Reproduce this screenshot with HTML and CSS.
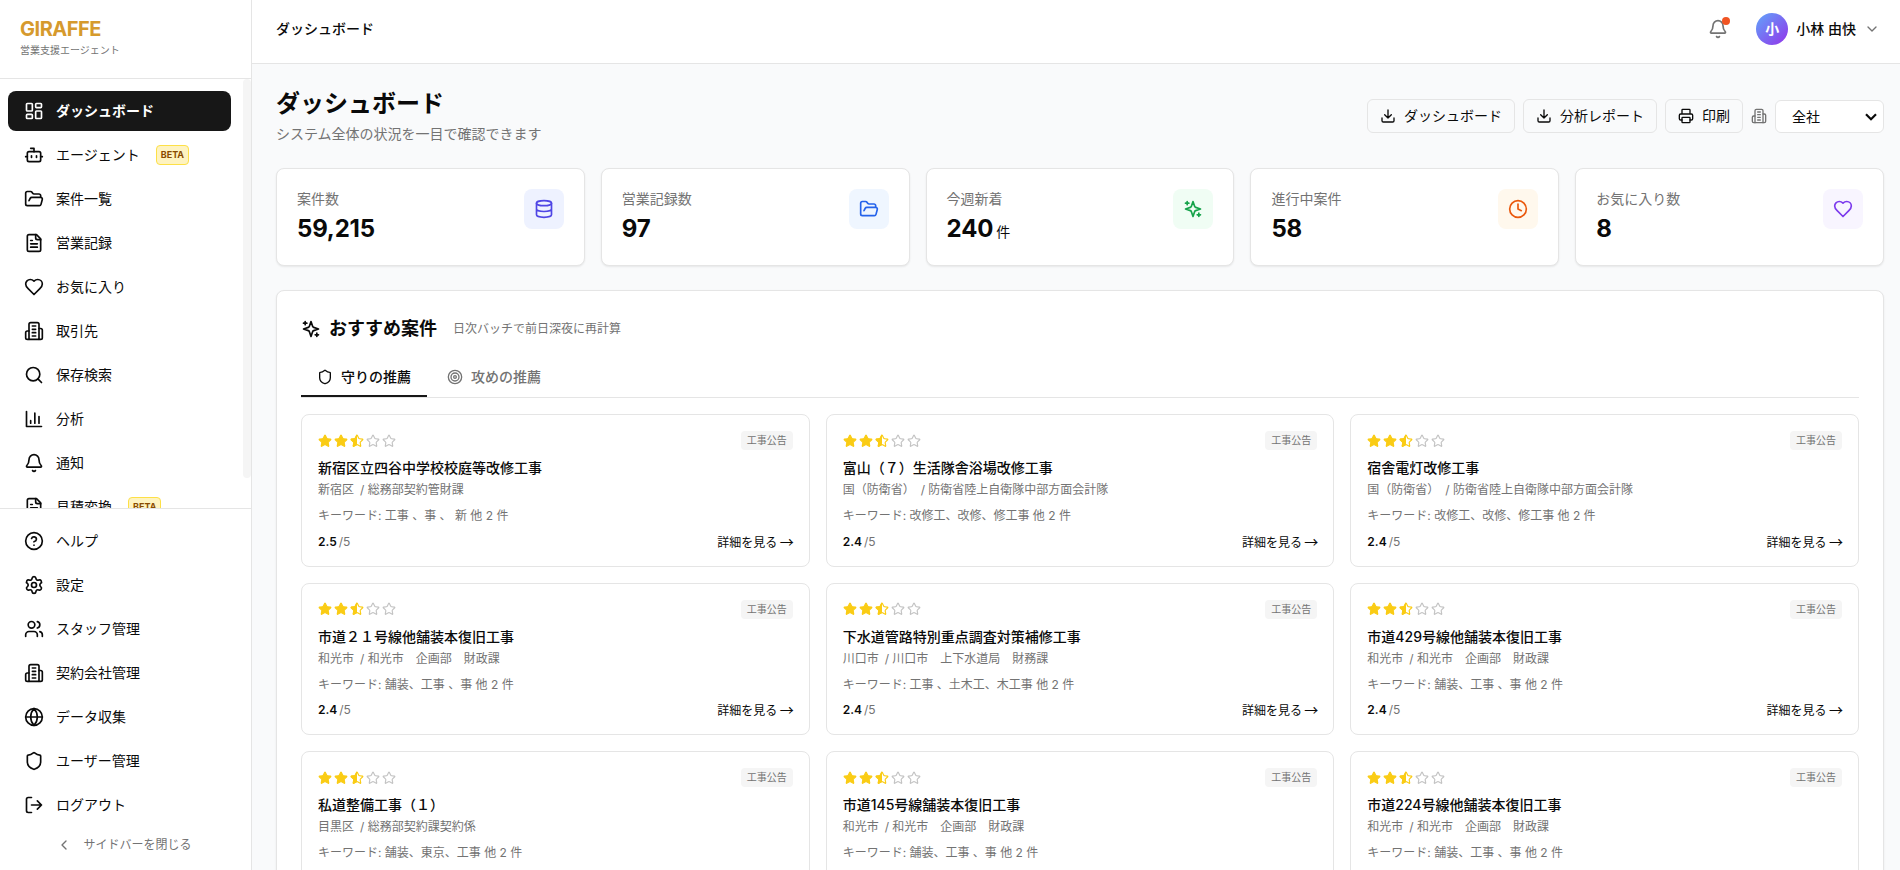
FILE: index.html
```html
<!DOCTYPE html>
<html lang="ja">
<head>
  <meta charset="UTF-8">
  <title>ダッシュボード | GIRAFFE</title>
  <link rel="stylesheet" href="styles.css">
</head>
<body>
  <!-- icon sprite -->
  <svg class="sprite" aria-hidden="true">
    <symbol id="i-dashboard" viewBox="0 0 24 24"><rect width="7" height="9" x="3" y="3" rx="1"/><rect width="7" height="5" x="14" y="3" rx="1"/><rect width="7" height="9" x="14" y="12" rx="1"/><rect width="7" height="5" x="3" y="16" rx="1"/></symbol>
    <symbol id="i-bot" viewBox="0 0 24 24"><path d="M12 8V4H8"/><rect width="16" height="12" x="4" y="8" rx="2"/><path d="M2 14h2M20 14h2M15 13v2M9 13v2"/></symbol>
    <symbol id="i-folder" viewBox="0 0 24 24"><path d="m6 14 1.5-2.9A2 2 0 0 1 9.24 10H20a2 2 0 0 1 1.94 2.5l-1.54 6a2 2 0 0 1-1.95 1.5H4a2 2 0 0 1-2-2V5a2 2 0 0 1 2-2h3.9a2 2 0 0 1 1.69.9l.81 1.2a2 2 0 0 0 1.67.9H18a2 2 0 0 1 2 2v2"/></symbol>
    <symbol id="i-file" viewBox="0 0 24 24"><path d="M15 2H6a2 2 0 0 0-2 2v16a2 2 0 0 0 2 2h12a2 2 0 0 0 2-2V7Z"/><path d="M14 2v4a2 2 0 0 0 2 2h4M10 9H8M16 13H8M16 17H8"/></symbol>
    <symbol id="i-heart" viewBox="0 0 24 24"><path d="M19 14c1.49-1.46 3-3.21 3-5.5A5.5 5.5 0 0 0 16.5 3c-1.76 0-3 .5-4.5 2-1.5-1.5-2.74-2-4.5-2A5.5 5.5 0 0 0 2 8.5c0 2.3 1.5 4.05 3 5.5l7 7Z"/></symbol>
    <symbol id="i-building" viewBox="0 0 24 24"><path d="M6 22V4a2 2 0 0 1 2-2h8a2 2 0 0 1 2 2v18Z"/><path d="M6 12H4a2 2 0 0 0-2 2v6a2 2 0 0 0 2 2h2M18 9h2a2 2 0 0 1 2 2v9a2 2 0 0 1-2 2h-2M10 6h4M10 10h4M10 14h4M10 18h4"/></symbol>
    <symbol id="i-search" viewBox="0 0 24 24"><circle cx="11" cy="11" r="8"/><path d="m21 21-4.3-4.3"/></symbol>
    <symbol id="i-chart" viewBox="0 0 24 24"><path d="M3 3v18h18M18 17V9M13 17V5M8 17v-3"/></symbol>
    <symbol id="i-bell" viewBox="0 0 24 24"><path d="M10.268 21a2 2 0 0 0 3.464 0"/><path d="M3.262 15.326A1 1 0 0 0 4 17h16a1 1 0 0 0 .74-1.673C19.41 13.956 18 12.499 18 8A6 6 0 0 0 6 8c0 4.499-1.411 5.956-2.738 7.326"/></symbol>
    <symbol id="i-help" viewBox="0 0 24 24"><circle cx="12" cy="12" r="10"/><path d="M9.09 9a3 3 0 0 1 5.83 1c0 2-3 3-3 3M12 17h.01"/></symbol>
    <symbol id="i-settings" viewBox="0 0 24 24"><path d="M9.671 4.136a2.34 2.34 0 0 1 4.659 0 2.34 2.34 0 0 0 3.319 1.915 2.34 2.34 0 0 1 2.33 4.033 2.34 2.34 0 0 0 0 3.831 2.34 2.34 0 0 1-2.33 4.033 2.34 2.34 0 0 0-3.319 1.915 2.34 2.34 0 0 1-4.659 0 2.34 2.34 0 0 0-3.32-1.915 2.34 2.34 0 0 1-2.33-4.033 2.34 2.34 0 0 0 0-3.831A2.34 2.34 0 0 1 6.35 6.051a2.34 2.34 0 0 0 3.319-1.915"/><circle cx="12" cy="12" r="3"/></symbol>
    <symbol id="i-users" viewBox="0 0 24 24"><path d="M16 21v-2a4 4 0 0 0-4-4H6a4 4 0 0 0-4 4v2"/><circle cx="9" cy="7" r="4"/><path d="M22 21v-2a4 4 0 0 0-3-3.87M16 3.13a4 4 0 0 1 0 7.75"/></symbol>
    <symbol id="i-globe" viewBox="0 0 24 24"><circle cx="12" cy="12" r="10"/><path d="M12 2a14.5 14.5 0 0 0 0 20 14.5 14.5 0 0 0 0-20M2 12h20"/></symbol>
    <symbol id="i-shield" viewBox="0 0 24 24"><path d="M20 13c0 5-3.5 7.5-7.66 8.95a1 1 0 0 1-.67-.01C7.5 20.5 4 18 4 13V6a1 1 0 0 1 1-1c2 0 4.5-1.2 6.24-2.72a1.17 1.17 0 0 1 1.52 0C14.51 3.81 17 5 19 5a1 1 0 0 1 1 1z"/></symbol>
    <symbol id="i-logout" viewBox="0 0 24 24"><path d="M9 21H5a2 2 0 0 1-2-2V5a2 2 0 0 1 2-2h4M16 17l5-5-5-5M21 12H9"/></symbol>
    <symbol id="i-left" viewBox="0 0 24 24"><path d="m15 18-6-6 6-6"/></symbol>
    <symbol id="i-down" viewBox="0 0 24 24"><path d="m6 9 6 6 6-6"/></symbol>
    <symbol id="i-download" viewBox="0 0 24 24"><path d="M21 15v4a2 2 0 0 1-2 2H5a2 2 0 0 1-2-2v-4M7 10l5 5 5-5M12 15V3"/></symbol>
    <symbol id="i-printer" viewBox="0 0 24 24"><path d="M6 18H4a2 2 0 0 1-2-2v-5a2 2 0 0 1 2-2h16a2 2 0 0 1 2 2v5a2 2 0 0 1-2 2h-2M6 9V3a1 1 0 0 1 1-1h10a1 1 0 0 1 1 1v6"/><rect x="6" y="14" width="12" height="8" rx="1"/></symbol>
    <symbol id="i-database" viewBox="0 0 24 24"><ellipse cx="12" cy="5" rx="9" ry="3"/><path d="M3 5v14a9 3 0 0 0 18 0V5M3 12a9 3 0 0 0 18 0"/></symbol>
    <symbol id="i-sparkles" viewBox="0 0 24 24"><path d="m12 3-1.912 5.813a2 2 0 0 1-1.275 1.275L3 12l5.813 1.912a2 2 0 0 1 1.275 1.275L12 21l1.912-5.813a2 2 0 0 1 1.275-1.275L21 12l-5.813-1.912a2 2 0 0 1-1.275-1.275L12 3Z"/><path d="M5 3v4M19 17v4M3 5h4M17 19h4"/></symbol>
    <symbol id="i-clock" viewBox="0 0 24 24"><circle cx="12" cy="12" r="10"/><path d="M12 6v6l4 2"/></symbol>
    <symbol id="i-target" viewBox="0 0 24 24"><circle cx="12" cy="12" r="10"/><circle cx="12" cy="12" r="6"/><circle cx="12" cy="12" r="2"/></symbol>
    <symbol id="i-star" viewBox="0 0 24 24"><path d="M11.525 2.295a.53.53 0 0 1 .95 0l2.31 4.679a2.123 2.123 0 0 0 1.595 1.16l5.166.756a.53.53 0 0 1 .294.904l-3.736 3.638a2.123 2.123 0 0 0-.611 1.878l.882 5.14a.53.53 0 0 1-.771.56l-4.618-2.428a2.122 2.122 0 0 0-1.973 0L6.396 21.01a.53.53 0 0 1-.77-.56l.881-5.139a2.122 2.122 0 0 0-.611-1.879L2.16 9.795a.53.53 0 0 1 .294-.906l5.165-.755a2.122 2.122 0 0 0 1.597-1.16z"/></symbol>
    <symbol id="i-star-half" viewBox="0 0 24 24"><path d="M12 18.338a2.1 2.1 0 0 0-.987.244L6.396 21.01a.53.53 0 0 1-.77-.56l.881-5.139a2.12 2.12 0 0 0-.611-1.879L2.16 9.795a.53.53 0 0 1 .294-.906l5.165-.755a2.12 2.12 0 0 0 1.597-1.16l2.309-4.679A.53.53 0 0 1 12 2"/></symbol>
    <symbol id="rating-half" viewBox="0 0 78 14">
      <use href="#i-star" class="star-on" x="0" width="14" height="14"/>
      <use href="#i-star" class="star-on" x="16" width="14" height="14"/>
      <use href="#i-star" class="star-line" x="32" width="14" height="14"/>
      <use href="#i-star-half" class="star-on" x="32" width="14" height="14"/>
      <use href="#i-star" class="star-off" x="48" width="14" height="14"/>
      <use href="#i-star" class="star-off" x="64" width="14" height="14"/>
    </symbol>
  </svg>

  <div class="app">
    <aside class="sidebar">
      <div class="brand">
        <div class="brand-name">GIRAFFE</div>
        <div class="brand-sub">営業支援エージェント</div>
      </div>

      <div class="nav-wrap">
        <nav class="nav">
          <a class="nav-item active"><svg class="icon"><use href="#i-dashboard"/></svg>ダッシュボード</a>
          <a class="nav-item"><svg class="icon"><use href="#i-bot"/></svg>エージェント<span class="beta">BETA</span></a>
          <a class="nav-item"><svg class="icon"><use href="#i-folder"/></svg>案件一覧</a>
          <a class="nav-item"><svg class="icon"><use href="#i-file"/></svg>営業記録</a>
          <a class="nav-item"><svg class="icon"><use href="#i-heart"/></svg>お気に入り</a>
          <a class="nav-item"><svg class="icon"><use href="#i-building"/></svg>取引先</a>
          <a class="nav-item"><svg class="icon"><use href="#i-search"/></svg>保存検索</a>
          <a class="nav-item"><svg class="icon"><use href="#i-chart"/></svg>分析</a>
          <a class="nav-item"><svg class="icon"><use href="#i-bell"/></svg>通知</a>
          <a class="nav-item"><svg class="icon"><use href="#i-file"/></svg>見積変換<span class="beta">BETA</span></a>
        </nav>
        <div class="nav-scroll"></div>
      </div>

      <div class="nav-bottom">
        <a class="nav-item"><svg class="icon"><use href="#i-help"/></svg>ヘルプ</a>
        <a class="nav-item"><svg class="icon"><use href="#i-settings"/></svg>設定</a>
        <a class="nav-item"><svg class="icon"><use href="#i-users"/></svg>スタッフ管理</a>
        <a class="nav-item"><svg class="icon"><use href="#i-building"/></svg>契約会社管理</a>
        <a class="nav-item"><svg class="icon"><use href="#i-globe"/></svg>データ収集</a>
        <a class="nav-item"><svg class="icon"><use href="#i-shield"/></svg>ユーザー管理</a>
        <a class="nav-item"><svg class="icon"><use href="#i-logout"/></svg>ログアウト</a>
        <a class="collapse"><svg class="icon icon-sm"><use href="#i-left"/></svg>サイドバーを閉じる</a>
      </div>
    </aside>

    <div class="main">
      <header class="topbar">
        <div class="topbar-title">ダッシュボード</div>
        <div class="topbar-right">
          <div class="bell"><svg class="icon"><use href="#i-bell"/></svg><span class="bell-dot"></span></div>
          <div class="user">
            <span class="avatar">小</span>
            <span>小林 由快</span>
            <svg class="icon icon-sm muted"><use href="#i-down"/></svg>
          </div>
        </div>
      </header>

      <main class="content">
        <div class="page-head">
          <div>
            <h1>ダッシュボード</h1>
            <p>システム全体の状況を一目で確認できます</p>
          </div>
          <div class="actions">
            <button class="btn"><svg class="icon icon-sm"><use href="#i-download"/></svg>ダッシュボード</button>
            <button class="btn"><svg class="icon icon-sm"><use href="#i-download"/></svg>分析レポート</button>
            <button class="btn"><svg class="icon icon-sm"><use href="#i-printer"/></svg>印刷</button>
            <svg class="icon icon-sm muted"><use href="#i-building"/></svg>
            <div class="scope">
              <select><option>全社</option></select>
              <svg class="scope-arrow" viewBox="0 0 12 8"><path d="M1 1.2 6 6.2 11 1.2"/></svg>
            </div>
          </div>
        </div>

        <section class="stats">
          <div class="stat">
            <div><div class="stat-label">案件数</div><div class="stat-value">59,215</div></div>
            <div class="stat-icon indigo"><svg class="icon"><use href="#i-database"/></svg></div>
          </div>
          <div class="stat">
            <div><div class="stat-label">営業記録数</div><div class="stat-value">97</div></div>
            <div class="stat-icon blue"><svg class="icon"><use href="#i-folder"/></svg></div>
          </div>
          <div class="stat">
            <div><div class="stat-label">今週新着</div><div class="stat-value">240<span class="unit">件</span></div></div>
            <div class="stat-icon green"><svg class="icon"><use href="#i-sparkles"/></svg></div>
          </div>
          <div class="stat">
            <div><div class="stat-label">進行中案件</div><div class="stat-value">58</div></div>
            <div class="stat-icon orange"><svg class="icon"><use href="#i-clock"/></svg></div>
          </div>
          <div class="stat">
            <div><div class="stat-label">お気に入り数</div><div class="stat-value">8</div></div>
            <div class="stat-icon purple"><svg class="icon"><use href="#i-heart"/></svg></div>
          </div>
        </section>

        <section class="panel">
          <div class="panel-head">
            <svg class="icon"><use href="#i-sparkles"/></svg>
            <h2>おすすめ案件</h2>
            <span class="panel-note">日次バッチで前日深夜に再計算</span>
          </div>
          <div class="tabs">
            <a class="tab active"><svg class="icon icon-sm"><use href="#i-shield"/></svg>守りの推薦</a>
            <a class="tab"><svg class="icon icon-sm"><use href="#i-target"/></svg>攻めの推薦</a>
          </div>

          <div class="cards">
            <article class="card">
              <div class="card-top"><svg class="stars"><use href="#rating-half"/></svg><span class="tag">工事公告</span></div>
              <h3>新宿区立四谷中学校校庭等改修工事</h3>
              <p class="org">新宿区<span class="dept">/ 総務部契約管財課</span></p>
              <p class="keywords">キーワード: 工事 、事 、 新 他 2 件</p>
              <div class="card-foot"><span><b>2.5</b><span class="max">/5</span></span><a>詳細を見る <span class="arrow">→</span></a></div>
            </article>
            <article class="card">
              <div class="card-top"><svg class="stars"><use href="#rating-half"/></svg><span class="tag">工事公告</span></div>
              <h3>富山（７）生活隊舎浴場改修工事</h3>
              <p class="org">国（防衛省）<span class="dept">/ 防衛省陸上自衛隊中部方面会計隊</span></p>
              <p class="keywords">キーワード: 改修工、改修、修工事 他 2 件</p>
              <div class="card-foot"><span><b>2.4</b><span class="max">/5</span></span><a>詳細を見る <span class="arrow">→</span></a></div>
            </article>
            <article class="card">
              <div class="card-top"><svg class="stars"><use href="#rating-half"/></svg><span class="tag">工事公告</span></div>
              <h3>宿舎電灯改修工事</h3>
              <p class="org">国（防衛省）<span class="dept">/ 防衛省陸上自衛隊中部方面会計隊</span></p>
              <p class="keywords">キーワード: 改修工、改修、修工事 他 2 件</p>
              <div class="card-foot"><span><b>2.4</b><span class="max">/5</span></span><a>詳細を見る <span class="arrow">→</span></a></div>
            </article>
            <article class="card">
              <div class="card-top"><svg class="stars"><use href="#rating-half"/></svg><span class="tag">工事公告</span></div>
              <h3>市道２１号線他舗装本復旧工事</h3>
              <p class="org">和光市<span class="dept">/ 和光市　企画部　財政課</span></p>
              <p class="keywords">キーワード: 舗装、工事 、事 他 2 件</p>
              <div class="card-foot"><span><b>2.4</b><span class="max">/5</span></span><a>詳細を見る <span class="arrow">→</span></a></div>
            </article>
            <article class="card">
              <div class="card-top"><svg class="stars"><use href="#rating-half"/></svg><span class="tag">工事公告</span></div>
              <h3>下水道管路特別重点調査対策補修工事</h3>
              <p class="org">川口市<span class="dept">/ 川口市　上下水道局　財務課</span></p>
              <p class="keywords">キーワード: 工事 、土木工、木工事 他 2 件</p>
              <div class="card-foot"><span><b>2.4</b><span class="max">/5</span></span><a>詳細を見る <span class="arrow">→</span></a></div>
            </article>
            <article class="card">
              <div class="card-top"><svg class="stars"><use href="#rating-half"/></svg><span class="tag">工事公告</span></div>
              <h3>市道429号線他舗装本復旧工事</h3>
              <p class="org">和光市<span class="dept">/ 和光市　企画部　財政課</span></p>
              <p class="keywords">キーワード: 舗装、工事 、事 他 2 件</p>
              <div class="card-foot"><span><b>2.4</b><span class="max">/5</span></span><a>詳細を見る <span class="arrow">→</span></a></div>
            </article>
            <article class="card">
              <div class="card-top"><svg class="stars"><use href="#rating-half"/></svg><span class="tag">工事公告</span></div>
              <h3>私道整備工事（１）</h3>
              <p class="org">目黒区<span class="dept">/ 総務部契約課契約係</span></p>
              <p class="keywords">キーワード: 舗装、東京、工事 他 2 件</p>
              <div class="card-foot"><span><b>2.4</b><span class="max">/5</span></span><a>詳細を見る <span class="arrow">→</span></a></div>
            </article>
            <article class="card">
              <div class="card-top"><svg class="stars"><use href="#rating-half"/></svg><span class="tag">工事公告</span></div>
              <h3>市道145号線舗装本復旧工事</h3>
              <p class="org">和光市<span class="dept">/ 和光市　企画部　財政課</span></p>
              <p class="keywords">キーワード: 舗装、工事 、事 他 2 件</p>
              <div class="card-foot"><span><b>2.4</b><span class="max">/5</span></span><a>詳細を見る <span class="arrow">→</span></a></div>
            </article>
            <article class="card">
              <div class="card-top"><svg class="stars"><use href="#rating-half"/></svg><span class="tag">工事公告</span></div>
              <h3>市道224号線他舗装本復旧工事</h3>
              <p class="org">和光市<span class="dept">/ 和光市　企画部　財政課</span></p>
              <p class="keywords">キーワード: 舗装、工事 、事 他 2 件</p>
              <div class="card-foot"><span><b>2.4</b><span class="max">/5</span></span><a>詳細を見る <span class="arrow">→</span></a></div>
            </article>
          </div>
        </section>
      </main>
    </div>
  </div>
</body>
</html>
```
FILE: styles.css
```css
* {
  box-sizing: border-box;
}
body {
  margin: 0;
  font-family: Inter, "Noto Sans CJK JP", sans-serif;
  font-size: 14px;
  line-height: 20px;
  color: #0a0a0a;
  background: #f9fafb;
}
h1, h2, h3, p {
  margin: 0;
}
.sprite {
  display: none;
}
.icon {
  width: 20px;
  height: 20px;
  flex: none;
  fill: none;
  stroke: currentColor;
  stroke-width: 2;
  stroke-linecap: round;
  stroke-linejoin: round;
}
.icon-sm {
  width: 16px;
  height: 16px;
}
.muted {
  color: #737373;
}
.app {
  display: flex;
  height: 100vh;
  overflow: hidden;
}

/* sidebar */
.sidebar {
  width: 252px;
  flex: none;
  display: flex;
  flex-direction: column;
  background: #fff;
  border-right: 1px solid #e5e5e5;
}
.brand {
  height: 79px;
  flex: none;
  padding: 15px 20px 0;
  border-bottom: 1px solid #e5e5e5;
}
.brand-name {
  font-size: 20px;
  line-height: 28px;
  font-weight: 700;
  letter-spacing: -0.5px;
  color: #d69a2d;
}
.brand-sub {
  font-size: 10px;
  line-height: 15px;
  color: #737373;
}
.nav-wrap {
  flex: 1;
  min-height: 0;
  display: flex;
}
.nav {
  flex: 1;
  overflow: hidden;
  display: flex;
  flex-direction: column;
  gap: 4px;
  padding: 12px 12px 12px 8px;
}
.nav-scroll {
  width: 8px;
  height: 93%;
  background: #f5f5f5;
  border-radius: 4px;
}
.nav-item {
  display: flex;
  align-items: center;
  gap: 12px;
  height: 40px;
  flex: none;
  padding: 0 16px;
  border-radius: 8px;
}
.nav-item.active {
  background: #171717;
  color: #fff;
  font-weight: 700;
}
.beta {
  margin-left: 4px;
  padding: 0 4px;
  height: 20px;
  font-size: 9px;
  line-height: 18px;
  font-weight: 700;
  color: #894b00;
  background: #fef3c0;
  border: 1px solid #fde047;
  border-radius: 4px;
}
.nav-bottom {
  flex: none;
  display: flex;
  flex-direction: column;
  gap: 4px;
  padding: 12px 12px 9px 8px;
  border-top: 1px solid #e5e5e5;
}
.collapse {
  display: flex;
  align-items: center;
  justify-content: center;
  gap: 11px;
  height: 32px;
  padding-left: 1px;
  font-size: 12px;
  color: #737373;
}

/* top bar */
.main {
  flex: 1;
  min-width: 0;
  display: flex;
  flex-direction: column;
}
.topbar {
  height: 64px;
  flex: none;
  display: flex;
  align-items: center;
  justify-content: space-between;
  padding: 0 20px 5px 24px;
  background: #fff;
  border-bottom: 1px solid #e5e5e5;
  font-weight: 500;
}
.topbar-right {
  display: flex;
  align-items: center;
  gap: 28px;
}
.bell {
  position: relative;
  display: flex;
  color: #737373;
}
.bell-dot {
  position: absolute;
  top: -2px;
  right: -2px;
  width: 8px;
  height: 8px;
  border-radius: 50%;
  background: #f05423;
}
.user {
  display: flex;
  align-items: center;
  gap: 8px;
}
.avatar {
  width: 32px;
  height: 32px;
  border-radius: 50%;
  background: linear-gradient(135deg, #60a5fa, #9333ea);
  color: #fff;
  font-weight: 700;
  line-height: 32px;
  text-align: center;
}

/* page */
.content {
  flex: 1;
  min-height: 0;
  overflow: hidden;
  padding: 24px 16px 0 24px;
}
.page-head {
  display: flex;
  align-items: center;
  justify-content: space-between;
  margin-bottom: 24px;
}
.page-head h1 {
  font-size: 24px;
  line-height: 32px;
  font-weight: 700;
}
.page-head p {
  margin-top: 4px;
  color: #737373;
}
.actions {
  display: flex;
  align-items: center;
  gap: 8px;
}
.btn {
  display: flex;
  align-items: center;
  gap: 8px;
  height: 34px;
  padding: 0 12px;
  font: inherit;
  color: inherit;
  background: transparent;
  border: 1px solid #e5e5e5;
  border-radius: 6px;
}
.scope {
  position: relative;
  display: flex;
  margin-top: 1px;
}
.scope select {
  appearance: none;
  width: 109px;
  height: 33px;
  padding: 0 16px;
  font: inherit;
  color: inherit;
  background-color: #fff;
  border: 1px solid #e5e5e5;
  border-radius: 6px;
}
.scope-arrow {
  position: absolute;
  right: 7px;
  top: 13px;
  width: 12px;
  height: 8px;
  fill: none;
  stroke: #0a0a0a;
  stroke-width: 2.2;
  pointer-events: none;
}

/* stats */
.stats {
  display: grid;
  grid-template-columns: repeat(5, 1fr);
  gap: 16px;
  margin-bottom: 24px;
}
.stat {
  display: flex;
  justify-content: space-between;
  padding: 20px;
  background: #fff;
  border: 1px solid #e5e5e5;
  border-radius: 8px;
  box-shadow: 0 1px 2px rgba(0, 0, 0, 0.08);
}
.stat-label {
  color: #737373;
}
.stat-value {
  margin-top: 4px;
  font-size: 24px;
  line-height: 32px;
  font-weight: 700;
  letter-spacing: -0.2px;
}
.unit {
  margin-left: 3px;
  font-size: 14px;
  line-height: 20px;
  font-weight: 400;
}
.stat-icon {
  width: 40px;
  height: 40px;
  display: flex;
  align-items: center;
  justify-content: center;
  border-radius: 8px;
}
.indigo { background: #eef2ff; color: #4f46e5; }
.blue { background: #eff6ff; color: #2563eb; }
.green { background: #f0fdf4; color: #16a34a; }
.orange { background: #fff8ed; color: #ea580c; }
.purple { background: #f8f5ff; color: #7c3aed; }

/* recommended projects */
.panel {
  padding: 24px;
  background: #fff;
  border: 1px solid #e5e5e5;
  border-radius: 8px;
  box-shadow: 0 1px 2px rgba(0, 0, 0, 0.08);
}
.panel-head {
  display: flex;
  align-items: center;
  gap: 8px;
  margin-bottom: 16px;
}
.panel-head h2 {
  font-size: 18px;
  line-height: 28px;
  font-weight: 700;
}
.panel-note {
  margin-left: 8px;
  font-size: 12px;
  color: #737373;
}
.tabs {
  display: flex;
  gap: 4px;
  margin-bottom: 16px;
  border-bottom: 1px solid #e5e5e5;
}
.tab {
  display: flex;
  align-items: center;
  gap: 8px;
  padding: 8px 16px;
  border-bottom: 2px solid transparent;
  font-weight: 500;
  color: #737373;
}
.tab.active {
  color: #0a0a0a;
  border-bottom-color: #171717;
}
.cards {
  display: grid;
  grid-template-columns: repeat(3, 1fr);
  grid-auto-rows: 152.5px;
  gap: 16px;
}
.card {
  padding: 16px;
  border: 1px solid #e5e5e5;
  border-radius: 8px;
}
.card-top {
  display: flex;
  align-items: center;
  justify-content: space-between;
  height: 19px;
  margin-bottom: 8px;
}
.stars {
  width: 78px;
  height: 14px;
  stroke-width: 2;
  stroke-linejoin: round;
}
.star-on { fill: #facc15; stroke: #facc15; }
.star-line { fill: none; stroke: #facc15; }
.star-off { fill: none; stroke: #c4c4c4; }
.tag {
  padding: 2px 6px;
  font-size: 10px;
  line-height: 15px;
  color: #737373;
  background: #f5f5f5;
  border-radius: 4px;
}
.card h3 {
  font-size: 14px;
  line-height: 20px;
  font-weight: 500;
}
.org {
  margin-top: 4px;
  font-size: 12px;
  line-height: 16px;
  color: #737373;
}
.dept {
  margin-left: 6px;
}
.keywords {
  margin: 8px 0;
  font-size: 12px;
  line-height: 19.5px;
  color: #737373;
}
.card-foot {
  display: flex;
  justify-content: space-between;
  height: 16px;
  font-size: 12px;
  line-height: 16px;
  white-space: nowrap;
}
.card-foot b {
  font-weight: 600;
}
.arrow {
  margin: 0 -1px;
  font-family: "Noto Sans CJK JP", sans-serif;
  font-size: 14px;
  line-height: 1;
}
.max {
  margin-left: 2px;
  color: #737373;
}
```
